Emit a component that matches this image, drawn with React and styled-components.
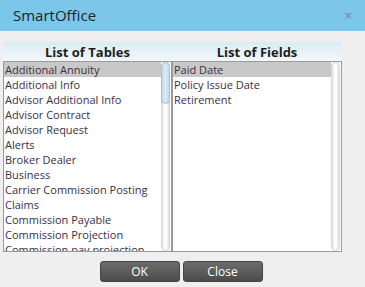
import React from "react";
import styled, { createGlobalStyle } from "styled-components";

const GlobalStyle = createGlobalStyle`
  html, body {
    margin: 0;
    padding: 0;
    background: #efefef;
  }
  body {
    font-family: "Open Sans", "Liberation Sans", sans-serif;
    color: #333;
  }
`;

// only the rows that fit in the box are rendered, the last one is cut by the box
const tables = [
  "Additional Annuity",
  "Additional Info",
  "Advisor Additional Info",
  "Advisor Contract",
  "Advisor Request",
  "Alerts",
  "Broker Dealer",
  "Business",
  "Carrier Commission Posting",
  "Claims",
  "Commission Payable",
  "Commission Projection",
  "Commission pay projection",
];

const fields = ["Paid Date", "Policy Issue Date", "Retirement"];

const App = () => {
  return (
    <>
      <GlobalStyle />
      <Dialog>
        <TitleBar>
          <Title>SmartOffice</Title>
          <CloseX>×</CloseX>
        </TitleBar>

        <Body>
          <Panel>
            <HeaderRow>
              <ColumnTitle>List of Tables</ColumnTitle>
              <ColumnTitle>List of Fields</ColumnTitle>
            </HeaderRow>
            <ListRow>
              <ListBox>
                <Items>
                  {tables.map((t, i) => (
                    <Item key={t} selected={i === 0}>
                      {t}
                    </Item>
                  ))}
                </Items>
                <ScrollTrack>
                  <ScrollThumb />
                </ScrollTrack>
              </ListBox>
              <ListBox>
                <Items>
                  {fields.map((f, i) => (
                    <Item key={f} selected={i === 0}>
                      {f}
                    </Item>
                  ))}
                </Items>
                <ScrollTrack />
              </ListBox>
            </ListRow>
          </Panel>

          <ButtonBar>
            <Button>OK</Button>
            <Button>Close</Button>
          </ButtonBar>
        </Body>
      </Dialog>
    </>
  );
};

export default App;

const Dialog = styled.div`
  width: 365px;
  height: 287px;
  display: flex;
  flex-direction: column;
  background: #efefef;
`;

const TitleBar = styled.div`
  height: 31px;
  display: flex;
  align-items: center;
  justify-content: space-between;
  padding: 0 12px 0 13px;
  background: #7cc6ea;
`;

const Title = styled.div`
  font-size: 15px;
  color: #222;
  padding-bottom: 1px;
`;

const CloseX = styled.span`
  font-size: 11px;
  color: #6f8a98;
  font-family: "DejaVu Sans", sans-serif;
`;

const Body = styled.div`
  padding: 11px 23px 0 3px;
`;

const Panel = styled.div`
  display: flex;
  flex-direction: column;
`;

const HeaderRow = styled.div`
  display: grid;
  grid-template-columns: 169px 170px;
  height: 19px;
  background: linear-gradient(#dbebf3, #f3f8fa);
  border-top-left-radius: 3px;
  border-top-right-radius: 3px;
`;

const ColumnTitle = styled.div`
  font-size: 13px;
  font-weight: 700;
  color: #1e1e1e;
  text-align: center;
  line-height: 20px;
`;

const ListRow = styled.div`
  display: grid;
  grid-template-columns: 169px 170px;
`;

const ListBox = styled.div`
  height: 189px;
  display: flex;
  background: #fff;
  border: 1px solid #9a9a9a;
  overflow: hidden;
`;

const Items = styled.div`
  flex: 1;
  min-width: 0;
  overflow: hidden;
`;

const Item = styled.div`
  font-size: 11px;
  line-height: 15px;
  height: 15px;
  padding-left: 1px;
  white-space: nowrap;
  color: #3a3045;
  background: ${(p) => (p.selected ? "#c8c8c8" : "transparent")};
`;

const ScrollTrack = styled.div`
  width: 9px;
  margin-right: 1px;
  box-sizing: border-box;
  border: 1px solid #d6d6d6;
  border-radius: 5px;
  background: linear-gradient(to right, #e0e0e0, #fff 40%, #fff 60%, #e0e0e0);
`;

const ScrollThumb = styled.div`
  height: 40px;
  margin: -1px;
  border: 1px solid #a2c3d8;
  border-radius: 5px;
  background: linear-gradient(to right, #c0dcee, #d9ebf6, #c0dcee);
`;

const ButtonBar = styled.div`
  display: flex;
  justify-content: center;
  gap: 3px;
  padding: 9px 0 0 17px;
`;

const Button = styled.button`
  width: 80px;
  height: 21px;
  padding: 0;
  border: 1px solid #464646;
  border-radius: 3px;
  background: linear-gradient(#6c6c6c, #4c4c4c);
  color: #fff;
  font-family: "Open Sans", "Liberation Sans", sans-serif;
  font-size: 12px;
  line-height: 19px;
  cursor: pointer;
`;
